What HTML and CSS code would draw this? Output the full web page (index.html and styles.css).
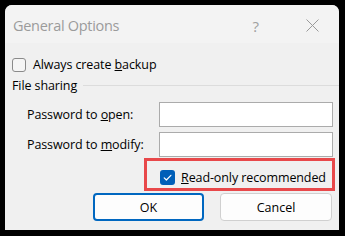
FILE: index.html
```html
<!DOCTYPE html>
<html>
<head>
<meta charset="utf-8">
<link rel="stylesheet" href="styles.css">
</head>
<body>
<div class="dialog">
  <div class="titlebar">
    <span class="title">General Options</span>
    <span class="help">?</span>
    <svg class="close" width="13" height="13" viewBox="0 0 13 13"><path d="M0.5 0.5L12.5 12.5M12.5 0.5L0.5 12.5" stroke="#9a9a9a" stroke-width="1" fill="none"/></svg>
  </div>
  <div class="content">
    <div class="row-check">
      <span class="box"></span>
      <span class="label">Always create <u>b</u>ackup</span>
    </div>
    <div class="group">
      <span class="group-label">File sharing</span>
      <span class="rule"></span>
    </div>
    <div class="field">
      <span class="field-label">Password to <u>o</u>pen:</span>
      <span class="input"></span>
    </div>
    <div class="field second">
      <span class="field-label">Password to <u>m</u>odify:</span>
      <span class="input"></span>
    </div>
    <div class="ro-row">
      <div class="highlight">
        <span class="box checked"><svg width="15" height="15" viewBox="0 0 15 15"><path d="M4.2 7.8L6.4 10L10.9 5.3" stroke="#fff" stroke-width="1.2" fill="none" stroke-linecap="round" stroke-linejoin="round"/></svg></span>
        <span class="label"><u>R</u>ead-only recommended</span>
      </div>
    </div>
    <div class="buttons">
      <span class="btn ok">OK</span>
      <span class="btn cancel">Cancel</span>
    </div>
  </div>
</div>
</body>
</html>
```
FILE: styles.css
```css
html, body {
  margin: 0;
  padding: 0;
  background: #000;
  width: 345px;
  height: 236px;
  overflow: hidden;
}
body {
  padding: 5px 6px 6px 5px;
  box-sizing: border-box;
  font-family: "Open Sans", "Noto Sans", sans-serif;
  color: #000;
}
.dialog {
  width: 334px;
  height: 225px;
  background: #f0f0f0;
  border-radius: 7px 7px 0 0;
  overflow: hidden;
  display: flex;
  flex-direction: column;
}
.titlebar {
  height: 38px;
  flex: none;
  background: #f3f3f3;
  display: flex;
  align-items: center;
  padding-left: 8px;
}
.title {
  font-size: 14.5px;
  color: #9b9b9b;
  letter-spacing: -0.3px;
  flex: 1;
  margin-top: 3px;
}
.help {
  font-size: 15px;
  color: #a0a0a0;
  margin-right: 47px;
  margin-top: 3px;
}
.close {
  margin-right: 20px;
  margin-top: 3px;
}
.content {
  padding: 14px 6px 0 7px;
  display: flex;
  flex-direction: column;
  font-size: 12.5px;
}
.row-check {
  display: flex;
  align-items: center;
  height: 15px;
}
.box {
  width: 14px;
  height: 14px;
  box-sizing: border-box;
  border: 1px solid #8a8a8a;
  border-radius: 3px;
  background: #f5f5f5;
  flex: none;
}
.row-check .label {
  margin-left: 7px;
  letter-spacing: -0.1px;
}
.group {
  display: flex;
  align-items: center;
  height: 14px;
  margin-top: 6px;
}
.group-label {
  letter-spacing: -0.1px;
}
.rule {
  flex: 1;
  height: 1px;
  background: #dcdcdc;
  margin-left: 6px;
  margin-right: -6px;
}
.field {
  display: flex;
  align-items: center;
  margin-top: 10px;
  padding-left: 15px;
}
.field.second {
  margin-top: 5px;
}
.field-label {
  flex: 1;
  letter-spacing: -0.1px;
}
.input {
  width: 174px;
  height: 25px;
  box-sizing: border-box;
  border: 1px solid #ababab;
  background: #fff;
}
.ro-row {
  display: flex;
  justify-content: flex-end;
  margin-top: 1px;
  margin-right: -2px;
}
.highlight {
  width: 191px;
  height: 33px;
  box-sizing: border-box;
  border: 3px solid #e8484a;
  display: flex;
  align-items: center;
  padding-left: 13px;
  padding-top: 6px;
}
.box.checked {
  width: 15px;
  height: 15px;
  border: none;
  background: #005fb8;
  border-radius: 3px;
  display: flex;
}
.highlight .label {
  margin-left: 6px;
  letter-spacing: -0.1px;
}
.buttons {
  display: flex;
  justify-content: flex-end;
  gap: 16px;
  margin-top: 2px;
  margin-right: 1px;
}
.btn {
  height: 28px;
  box-sizing: border-box;
  border-radius: 4px;
  background: #fdfdfd;
  display: flex;
  align-items: center;
  justify-content: center;
  font-size: 12.5px;
}
.ok {
  width: 111px;
  border: 2px solid #0067c0;
}
.cancel {
  width: 112px;
  border: 1px solid #d0d0d0;
}
```
